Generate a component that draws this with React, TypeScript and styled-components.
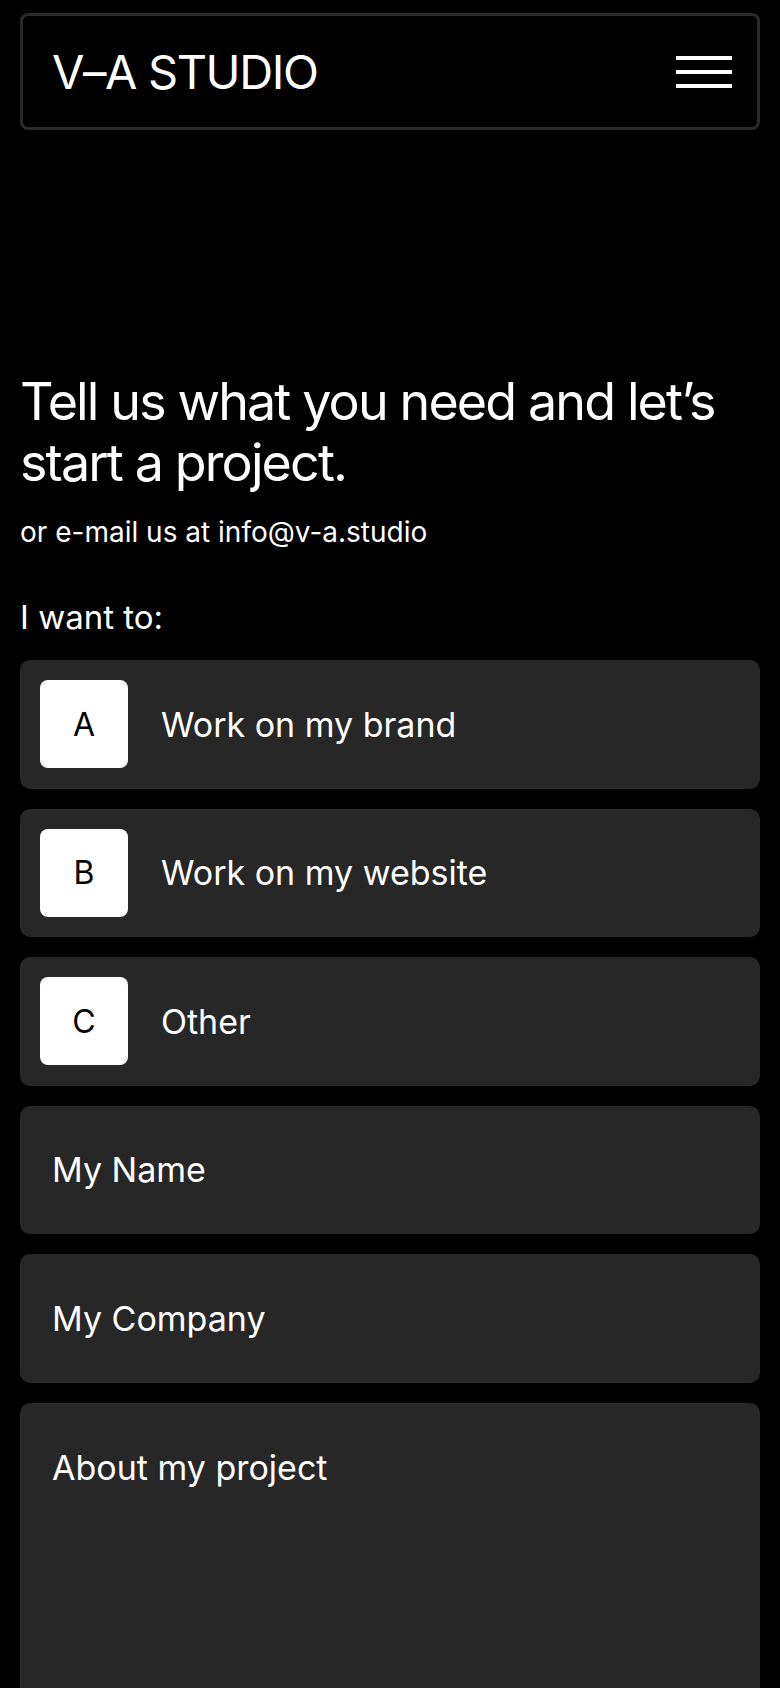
import React from "react";
import styled, { createGlobalStyle } from "styled-components";

const GlobalStyle = createGlobalStyle`
  html, body {
    margin: 0;
    padding: 0;
    background: #000;
  }
  body {
    font-family: Inter, "Noto Sans", sans-serif;
    color: #fff;
    -webkit-font-smoothing: antialiased;
  }
  * { box-sizing: border-box; }
`;

const Page = styled.div`
  padding: 13px 20px 0;
  display: flex;
  flex-direction: column;
`;

const Header = styled.header`
  height: 117px;
  border: 3px solid #2b2b2b;
  border-radius: 8px;
  display: flex;
  align-items: center;
  justify-content: space-between;
  padding: 0 25px 0 29px;
`;

const Logo = styled.div`
  font-size: 47px;
  font-weight: 400;
  letter-spacing: -0.03em;
  line-height: 1;
`;

const Burger = styled.button`
  width: 56px;
  height: 32px;
  background: none;
  border: none;
  padding: 0;
  display: flex;
  flex-direction: column;
  justify-content: space-between;
  cursor: pointer;
`;

const Bar = styled.span`
  display: block;
  height: 4px;
  background: #fff;
`;

const Heading = styled.h1`
  margin: 241px 0 0;
  font-size: 52px;
  line-height: 61px;
  font-weight: 400;
  letter-spacing: -0.036em;
`;

const Sub = styled.p`
  margin: 22px 0 0;
  font-size: 28px;
  line-height: 34px;
  letter-spacing: 0;
`;

const Label = styled.p`
  margin: 48px 0 0;
  font-size: 33px;
  line-height: 40px;
  letter-spacing: 0;
`;

const Fields = styled.div`
  margin-top: 23px;
  display: flex;
  flex-direction: column;
  gap: 20px;
`;

const Option = styled.button`
  height: 128.5px;
  background: #272727;
  border: none;
  border-radius: 10px;
  padding: 20px;
  display: flex;
  align-items: center;
  gap: 33px;
  color: #fff;
  font-family: inherit;
  text-align: left;
  cursor: pointer;
`;

const Key = styled.span`
  width: 88px;
  height: 88px;
  flex: none;
  background: #fff;
  color: #000;
  border-radius: 8px;
  display: flex;
  align-items: center;
  justify-content: center;
  font-size: 32px;
`;

const OptionText = styled.span`
  font-size: 34px;
  letter-spacing: 0;
`;

const Input = styled.input`
  height: 128.5px;
  background: #272727;
  border: none;
  border-radius: 10px;
  padding: 0 32px;
  font-family: inherit;
  font-size: 34px;
  letter-spacing: 0;
  color: #fff;
  outline: none;
  &::placeholder { color: #fff; opacity: 1; }
`;

const Area = styled.textarea`
  height: 340px;
  background: #272727;
  border: none;
  border-radius: 10px;
  padding: 44px 32px;
  font-family: inherit;
  font-size: 34px;
  line-height: 41px;
  letter-spacing: 0;
  color: #fff;
  outline: none;
  resize: none;
  &::placeholder { color: #fff; opacity: 1; }
`;

const options = [
  { key: "A", text: "Work on my brand" },
  { key: "B", text: "Work on my website" },
  { key: "C", text: "Other" },
];

export default function App() {
  return (
    <>
      <GlobalStyle />
      <Page>
        <Header>
          <Logo>V–A STUDIO</Logo>
          <Burger aria-label="Menu">
            <Bar />
            <Bar />
            <Bar />
          </Burger>
        </Header>
        <Heading>Tell us what you need and let’s start a project.</Heading>
        <Sub>or e-mail us at info@v-a.studio</Sub>
        <Label>I want to:</Label>
        <Fields>
          {options.map((o) => (
            <Option key={o.key} type="button">
              <Key>{o.key}</Key>
              <OptionText>{o.text}</OptionText>
            </Option>
          ))}
          <Input placeholder="My Name" />
          <Input placeholder="My Company" />
          <Area placeholder="About my project" />
        </Fields>
      </Page>
    </>
  );
}
